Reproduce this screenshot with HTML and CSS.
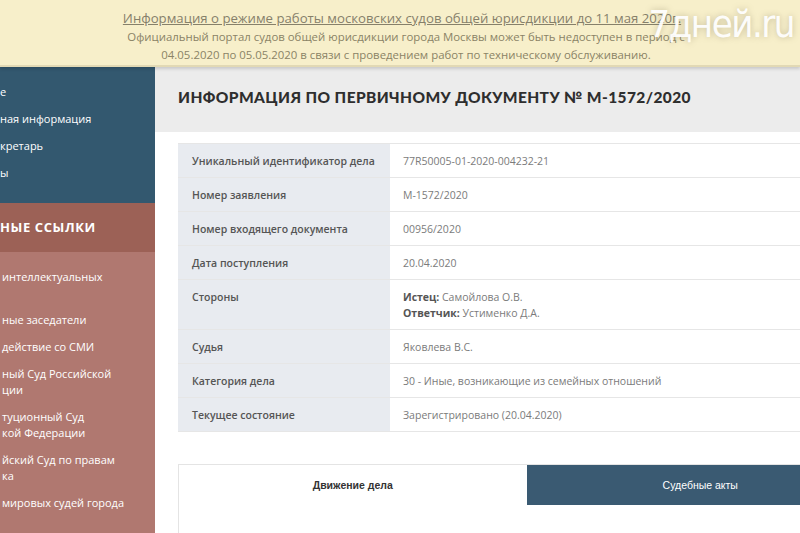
FILE: index.html
```html
<!DOCTYPE html>
<html lang="ru">
<head>
  <meta charset="UTF-8" />
  <meta name="viewport" content="width=device-width, initial-scale=1" />
  <title>Информация по первичному документу</title>
  <link rel="stylesheet" href="styles.css">
</head>
<body>

  <!-- Top notice -->
  <div class="notice">
    <a class="notice-link" href="#">Информация о режиме работы московских судов общей юрисдикции до 11 мая 2020г.</a>
    <p>Официальный портал судов общей юрисдикции города Москвы может быть недоступен в период с<br>
    04.05.2020 по 05.05.2020 в связи с проведением работ по техническому обслуживанию.</p>
    <span class="watermark">7дней.ru</span>
  </div>

  <div class="layout">
    <aside class="sidebar">
      <ul class="side-nav">
        <li>е</li>
        <li>ная информация</li>
        <li>кретарь</li>
        <li>ы</li>
      </ul>
      <div class="side-head">НЫЕ ССЫЛКИ</div>
      <ul class="side-links">
        <li>интеллектуальных<br>&nbsp;</li>
        <li>ные заседатели</li>
        <li>действие со СМИ</li>
        <li>ный Суд Российской<br>ции</li>
        <li>туционный Суд<br>кой Федерации</li>
        <li>йский Суд по правам<br>ка</li>
        <li>мировых судей города<br>&nbsp;</li>
      </ul>
    </aside>

    <main class="content">
      <div class="page-head">
        <h1>Информация по первичному документу № М-1572/2020</h1>
      </div>

      <div class="card">
        <table class="info">
          <tr><th>Уникальный идентификатор дела</th><td>77R50005-01-2020-004232-21</td></tr>
          <tr><th>Номер заявления</th><td>М-1572/2020</td></tr>
          <tr><th>Номер входящего документа</th><td>00956/2020</td></tr>
          <tr><th>Дата поступления</th><td>20.04.2020</td></tr>
          <tr class="tall"><th>Стороны</th><td><b>Истец:</b> Самойлова О.В.<br><b>Ответчик:</b> Устименко Д.А.</td></tr>
          <tr><th>Судья</th><td>Яковлева В.С.</td></tr>
          <tr><th>Категория дела</th><td>30 - Иные, возникающие из семейных отношений</td></tr>
          <tr><th>Текущее состояние</th><td>Зарегистрировано (20.04.2020)</td></tr>
        </table>

        <div class="tabs">
          <div class="tab-bar">
            <div class="tab current">Движение дела</div>
            <div class="tab">Судебные акты</div>
          </div>
          <div class="tab-body"></div>
        </div>
      </div>
    </main>
  </div>

</body>
</html>
```

FILE: styles.css
```css
* {
  margin: 0;
  padding: 0;
  box-sizing: border-box;
}

body {
  width: 800px;
  height: 533px;
  overflow: hidden;
  background: #fff;
  font-family: "Open Sans", Arial, sans-serif;
  color: #555;
}

/* notice strip */
.notice {
  position: relative;
  height: 67px;
  background: #f7efca;
  border-bottom: 2px solid #e2d9b4;
  box-shadow: 0 2px 3px rgba(0,0,0,0.15);
  text-align: center;
  padding: 9px 0 0 12px;
  color: #8a8366;
  z-index: 2;
}

.notice-link {
  display: block;
  font-size: 13.2px;
  line-height: 18px;
  color: #86806a;
  text-decoration: underline;
  padding-right: 8px;
}

.notice p {
  font-size: 11.4px;
  line-height: 18px;
  margin-top: 1px;
}

/* site watermark over the screenshot */
.watermark {
  position: absolute;
  top: 2px;
  right: 6px;
  font-family: "DejaVu Sans", Roboto, sans-serif;
  font-stretch: condensed;
  font-size: 38px;
  line-height: 44px;
  letter-spacing: -1.5px;
  color: rgba(255,255,255,0.95);
  text-shadow: 0 0 6px rgba(120,110,80,0.4);
}

/* layout */
.layout {
  display: flex;
  height: 466px;
}

.sidebar {
  width: 155px;
  flex-shrink: 0;
  background: #b07870;
  color: #fff;
  font-size: 11px;
  line-height: 16px;
}

.sidebar ul {
  list-style: none;
}

.side-nav {
  background: #33586f;
  padding: 17px 0 22px;
}

.side-nav li + li {
  margin-top: 11px;
}

.side-head {
  height: 49px;
  background: #9c6156;
  font-size: 13px;
  font-weight: 700;
  letter-spacing: 0.6px;
  line-height: 49px;
}

.side-links {
  padding: 17px 0 0 2px;
}

.side-links li + li {
  margin-top: 11px;
}

/* main column */
.content {
  flex: 1;
  min-width: 0;
}

.page-head {
  height: 65px;
  background: #ececec;
  padding: 0 0 6px 23px;
  display: flex;
  align-items: center;
}

.page-head h1 {
  font-family: Lato, "DejaVu Sans", sans-serif;
  font-weight: 900;
  font-size: 15.5px;
  letter-spacing: 0.4px;
  text-transform: uppercase;
  color: #2e2e2e;
  white-space: nowrap;
}

.card {
  width: 720px;
  padding: 11px 0 0 23px;
}

.info {
  width: 697px;
  border-collapse: collapse;
  font-size: 10.5px;
}

.info tr {
  height: 34px;
  border-bottom: 1px solid #e6e6e6;
}

.info tr:first-child {
  border-top: 1px solid #e6e6e6;
}

.info tr.tall {
  height: 50px;
}

.info th {
  width: 212px;
  background: #e8ebf0;
  text-align: left;
  font-weight: 600;
  color: #555;
  padding-left: 14px;
}

.info td {
  color: #7b7b7b;
  padding-left: 13px;
}

.info tr.tall th,
.info tr.tall td {
  vertical-align: top;
  padding-top: 9px;
  line-height: 16px;
}

.info td b {
  font-weight: 700;
  color: #555;
}

/* tabs */
.tabs {
  margin-top: 32px;
  width: 697px;
  border: 1px solid #e4e4e4;
  border-bottom: none;
}

.tab-bar {
  display: flex;
  height: 40px;
}

.tab {
  flex: 1;
  display: flex;
  align-items: center;
  justify-content: center;
  font-family: "Liberation Sans", Arial, sans-serif;
  font-size: 10.5px;
  background: #3a5a72;
  color: #fff;
}

.tab.current {
  background: #fff;
  color: #333;
  font-weight: 700;
}

.tab-body {
  height: 40px;
}
```
